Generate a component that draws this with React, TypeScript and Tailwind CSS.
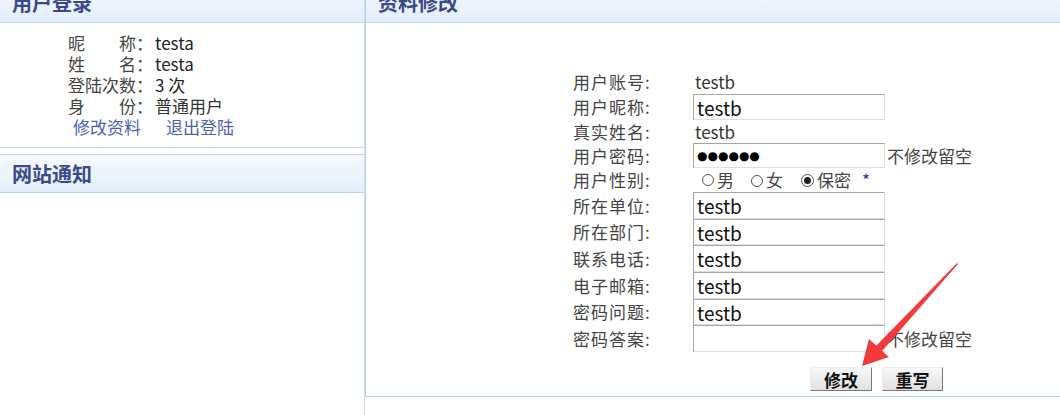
import type { ReactNode } from 'react'

type Row =
  | { label: string; kind: 'text'; value: string; h: number }
  | { label: string; kind: 'input'; value: string; h: number; note?: string }
  | { label: string; kind: 'password'; h: number; note: string }
  | { label: string; kind: 'gender'; h: number }

const ROWS: Row[] = [
  { label: '用户账号', kind: 'text', value: 'testb', h: 24 },
  { label: '用户昵称', kind: 'input', value: 'testb', h: 26 },
  { label: '真实姓名', kind: 'text', value: 'testb', h: 23 },
  { label: '用户密码', kind: 'password', h: 25, note: '不修改留空' },
  { label: '用户性别', kind: 'gender', h: 24 },
  { label: '所在单位', kind: 'input', value: 'testb', h: 27 },
  { label: '所在部门', kind: 'input', value: 'testb', h: 26 },
  { label: '联系电话', kind: 'input', value: 'testb', h: 27 },
  { label: '电子邮箱', kind: 'input', value: 'testb', h: 27 },
  { label: '密码问题', kind: 'input', value: 'testb', h: 26 },
  { label: '密码答案', kind: 'input', value: '', h: 27, note: '不修改留空' },
]

const boxCls =
  'w-[192px] h-full border border-t-[#a5a5a5] border-l-[#a5a5a5] border-r-[#dedede] border-b-[#dedede] bg-white px-[3px] text-[19px] text-[#111] outline-none'

function Header({ title, top }: { title: string; top?: boolean }) {
  return (
    <div
      className={`h-[39px] flex items-center pl-[12px] bg-gradient-to-b from-[#f5f9fe] to-[#e3eefa] border-b border-[#b9d5f2] ${top ? 'border-t' : ''}`}
    >
      <span className="text-[20px] font-bold text-[#3b4a86] leading-none">{title}</span>
    </div>
  )
}

function Radio({ checked }: { checked?: boolean }) {
  return (
    <span
      className={`inline-flex items-center justify-center rounded-full border border-[#555] bg-white ${checked ? 'w-[13px] h-[13px]' : 'w-[12px] h-[12px]'}`}
    >
      {checked && <span className="w-[7px] h-[7px] rounded-full bg-[#222]" />}
    </span>
  )
}

function Value({ row }: { row: Row }): ReactNode {
  switch (row.kind) {
    case 'text':
      return <span className="text-[17px] text-[#333] pl-[2px]">{row.value}</span>
    case 'input':
      return (
        <>
          <input className={boxCls} defaultValue={row.value} readOnly />
          {row.note && <span className="ml-[2px] text-[17px] text-[#444]">{row.note}</span>}
        </>
      )
    case 'password':
      return (
        <>
          <div className={`${boxCls} flex items-center`}>
            <span className="text-[12px] tracking-[0px] text-black font-['DejaVu_Sans',sans-serif]">●●●●●●</span>
          </div>
          <span className="ml-[2px] text-[17px] text-[#444]">{row.note}</span>
        </>
      )
    case 'gender':
      return (
        <div className="flex items-center pl-[9px] text-[17px] text-[#444]">
          <Radio />
          <span className="ml-[3px]">男</span>
          <span className="ml-[17px]"><Radio /></span>
          <span className="ml-[3px]">女</span>
          <span className="ml-[18px] inline-flex"><Radio checked /></span>
          <span className="ml-[3px]">保密</span>
          <span className="ml-[11px] text-[#2b3a8a]">*</span>
        </div>
      )
  }
}

export default function App() {
  return (
    <div className="relative w-[1060px] h-[415px] overflow-hidden bg-white font-['Noto_Sans_CJK_SC',sans-serif] text-[#444]">
      <div className="flex -mt-[16px] h-[431px]">
        {/* left column */}
        <aside className="w-[365px] shrink-0 border-r border-[#c6dcf2] flex flex-col">
          <section className="border-b border-[#b9d5f2]">
            <Header title="用户登录" />
            <div className="pt-[9px] pb-[10px] pl-[68px] text-[17px] leading-[21px] text-[#444]">
              <div className="flex"><span className="w-[87px]">昵　　称：</span><span className="text-[#222]">testa</span></div>
              <div className="flex"><span className="w-[87px]">姓　　名：</span><span className="text-[#222]">testa</span></div>
              <div className="flex"><span className="w-[87px]">登陆次数：</span><span className="text-[#222]">3 次</span></div>
              <div className="flex"><span className="w-[87px]">身　　份：</span><span className="text-[#333]">普通用户</span></div>
              <div className="flex gap-[25px] pl-[5px] text-[#4d5fb0]">
                <a>修改资料</a>
                <a>退出登陆</a>
              </div>
            </div>
          </section>
          <section className="mt-[6px]">
            <Header title="网站通知" top />
          </section>
        </aside>

        {/* right panel */}
        <main className="flex-1 self-start border-l border-b border-[#b4d1f1]">
          <Header title="资料修改" />
          <div className="h-[373px] pt-[47px] pl-[207px]">
            {ROWS.map((r) => (
              <div key={r.label} className="flex items-center" style={{ height: r.h }}>
                <span className="w-[120px] shrink-0 text-[17px] tracking-[1px] text-[#444]">{r.label}:</span>
                <div className="flex items-center h-full">
                  <Value row={r} />
                </div>
              </div>
            ))}
            <div className="flex gap-[10px] mt-[15px] ml-[237px]">
              <button className="w-[62px] h-[24px] border border-t-[#eee] border-l-[#eee] border-r-[#777] border-b-[#777] bg-gradient-to-b from-[#f7f7f7] to-[#e1e1e1] text-[17px] font-bold text-[#111] leading-none">
                修改
              </button>
              <button className="w-[61px] h-[24px] border border-t-[#eee] border-l-[#eee] border-r-[#777] border-b-[#777] bg-gradient-to-b from-[#f7f7f7] to-[#e1e1e1] text-[17px] font-bold text-[#111] leading-none">
                重写
              </button>
            </div>
          </div>
        </main>
      </div>

      {/* red annotation arrow */}
      <svg className="absolute inset-0 pointer-events-none" width="1060" height="415" viewBox="0 0 1060 415">
        <polygon points="957,263 958,264 882,351 876,346" fill="#f23a3a" />
        <polygon points="862,366 869,339 889,357" fill="#f23a3a" />
      </svg>
    </div>
  )
}
